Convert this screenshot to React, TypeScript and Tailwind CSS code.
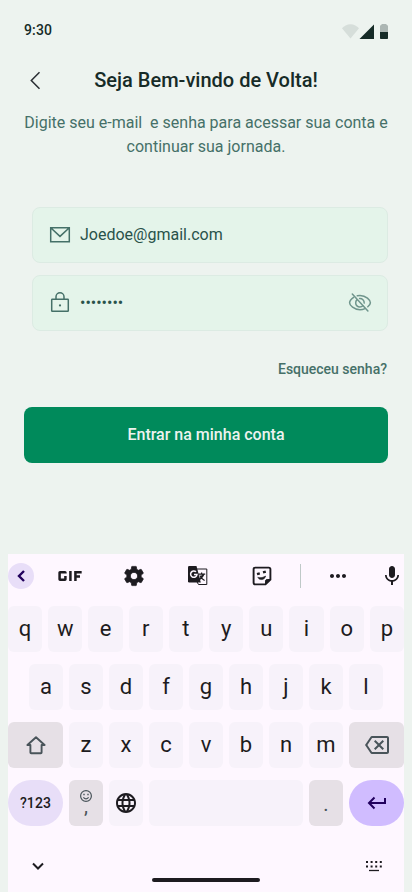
import { useState } from "react"
import {
  MdGif,
  MdSettings,
  MdMic,
  MdLanguage,
  MdMoreHoriz,
  MdOutlineBackspace,
} from "react-icons/md"

const topRow = ["q", "w", "e", "r", "t", "y", "u", "i", "o", "p"]
const middleRow = ["a", "s", "d", "f", "g", "h", "j", "k", "l"]
const bottomRow = ["z", "x", "c", "v", "b", "n", "m"]

function StatusBar() {
  return (
    <div className="flex h-[52px] items-center justify-between px-6 pt-2">
      <span className="text-sm font-medium leading-5 tracking-[0.14px] text-[#162b27]">9:30</span>
      <svg className="relative top-0.5" width="46" height="17" viewBox="0 0 46 17" fill="#162b27">
        <path d="M8.5 14.5 0 4.2C2 2 5 .2 8.5 .2S15 2 17 4.2Z" opacity="0.1" />
        <path d="M17.5 15 32 .5V15Z" />
        <path d="M38 8V2.2Q38 1 39.5 1V0h5v1Q46 1 46 2.2V8Z" opacity="0.3" />
        <path d="M38 8h8v6.2q0 .8-.8.8h-6.4q-.8 0-.8-.8Z" />
      </svg>
    </div>
  )
}

function Key({ label }: { label: string }) {
  return (
    <button className="flex h-[46px] min-w-0 flex-1 items-center justify-center rounded-md bg-[#f7f2fa] pb-px text-[22px] leading-7 text-[#1d1b20]">
      {label}
    </button>
  )
}

function Toolbar() {
  return (
    <div className="flex h-[44px] items-center text-[#1d1b20]">
      <button className="flex size-[26px] items-center justify-center rounded-full bg-[#e8def8]">
        <svg width="26" height="26" viewBox="0 0 26 26" fill="none" stroke="#21005d" strokeWidth="2.4">
          <path d="m16 8-5 5 5 5" />
        </svg>
      </button>
      <MdGif className="-mr-2 ml-4 size-10" />
      <MdSettings className="ml-10 size-6 [&>path:first-child]:hidden" stroke="currentColor" strokeWidth="0.7" />
      {/* Translate */}
      <svg className="ml-10" width="24" height="24" viewBox="0 0 24 24" fill="none" stroke="currentColor" strokeWidth="1">
        <path d="M10.5 5h10.3v15.5h-8.3L10.5 17Z" />
        <path d="M3.2 2h7.3l4.3 16.5H3.2q-1.2 0-1.2-1.2V3.2Q2 2 3.2 2Z" fill="currentColor" stroke="none" />
        <path d="m12.6 16.2 4-5.4M12.2 10.2h7M15.6 8.6v1.6M13.8 11.6q1.5 3 4.8 5M17.8 10.2q-.8 3.2-5 6" strokeWidth="1.2" />
        <path d="M10 7.8A3.2 3.2 0 1 0 11 10.5H8" stroke="#fef7ff" strokeWidth="1.5" />
      </svg>
      <svg className="ml-10" width="24" height="24" viewBox="0 0 24 24" fill="none" stroke="currentColor" strokeWidth="1.9">
        <path d="M15.5 20.4H5.3q-1.7 0-1.7-1.7V5.3q0-1.7 1.7-1.7h13.4q1.7 0 1.7 1.7v10.2Z" />
        <path d="M15.5 20.4v-3.2q0-1.7 1.7-1.7h3.2Z" fill="currentColor" strokeWidth="1" />
        <path d="m7 10.2 2.8-.8M13 8.4l2.8-.8" strokeWidth="2.4" />
        <path d="M7.7 13.4q4.4 1.1 8-1.3-1 3.3-3.9 3.5-2.6 0-4.1-2.2Z" fill="currentColor" strokeWidth=".6" />
      </svg>
      <div className="ml-[26px] h-6 w-px bg-[#bfc9c8]" />
      <MdMoreHoriz className="ml-[25px] size-6" />
      <MdMic className="ml-[30px] size-6" />
    </div>
  )
}

function Keyboard() {
  return (
    <div className="mx-2 h-[338px] bg-[#fef7ff]">
      <Toolbar />
      <div className="mt-2 flex flex-col gap-3">
        <div className="flex gap-1.5">
          {topRow.map((k) => <Key key={k} label={k} />)}
        </div>
        <div className="flex gap-1.5 px-[21px]">
          {middleRow.map((k) => <Key key={k} label={k} />)}
        </div>
        <div className="flex gap-1.5">
          <button className="flex w-[55px] items-center justify-center rounded-md bg-[#e6e0e6]">
            <svg width="24" height="24" viewBox="0 0 24 24" fill="none" stroke="#49545a" strokeWidth="1.9" strokeLinejoin="round">
              <path d="M12 4.2 3.4 12h3v7.4q0 .8.8.8h9.6q.8 0 .8-.8V12h3Z" />
            </svg>
          </button>
          {bottomRow.map((k) => <Key key={k} label={k} />)}
          <button className="flex w-[55px] items-center justify-center rounded-md bg-[#e6e0e6]">
            <MdOutlineBackspace className="size-6 text-[#49545a]" />
          </button>
        </div>
        <div className="flex h-[46px] gap-1.5">
          <button className="w-[55px] rounded-full bg-[#e8def8] text-sm font-medium tracking-[0.1px] text-[#1d1b20]">?123</button>
          <button className="flex w-[34px] flex-col items-center rounded-md bg-[#e6e0e6] pt-2.5 text-[#49545a]">
            <svg width="12" height="12" viewBox="0 0 12 12" fill="none" stroke="currentColor" strokeWidth="1.2">
              <circle cx="6" cy="6" r="5.4" />
              <path d="M3.4 7.3q2.6 3.2 5.2 0" />
              <path d="M4 3.7v1.5M8 3.7v1.5" strokeWidth="1.4" />
            </svg>
            <span className="-mt-1 text-xl leading-4">,</span>
          </button>
          <button className="flex w-[34px] items-center justify-center rounded-md bg-[#f7f2fa]">
            <MdLanguage className="size-6 text-[#1d1b20]" />
          </button>
          <button className="flex-1 rounded-md bg-[#f7f2fa]" />
          <button className="w-[34px] rounded-md bg-[#e6e0e6] pt-0.5 text-xl text-[#49545a]">.</button>
          <button className="flex w-[55px] items-center justify-center rounded-full bg-[#d0bcff]">
            <svg width="24" height="24" viewBox="0 0 24 24" fill="none" stroke="#21005d" strokeWidth="2">
              <path d="M20 7v5H4.5M9.5 6.5 4 12l5.5 5.5" />
            </svg>
          </button>
        </div>
      </div>
      <div className="mt-[28px] flex justify-between px-[18px]">
        <svg width="24" height="24" viewBox="0 0 24 24" fill="none" stroke="#1d1b20" strokeWidth="2">
          <path d="m7 9.5 5 5 5-5" />
        </svg>
        <svg width="24" height="24" viewBox="0 0 24 24" fill="none" stroke="#1d1b20" strokeWidth="2">
          <path d="M4 8h16M4 12.5h16" strokeDasharray="2 2.6" />
          <path d="M7 16.5h10" strokeWidth="1.3" />
        </svg>
      </div>
      <div className="mx-auto h-1 w-[108px] rounded-full bg-[#1d1b20]" />
    </div>
  )
}

export default function App() {
  const [email, setEmail] = useState("Joedoe@gmail.com")
  const [password, setPassword] = useState("12345678")
  const [visible, setVisible] = useState(false)

  return (
    <div className="flex h-[892px] w-[412px] flex-col justify-between overflow-hidden bg-[#edf3ef] font-[Roboto,sans-serif]">
      <div>
        <StatusBar />

        {/* Header */}
        <div className="relative mt-3.5 flex h-7 items-center justify-center">
          <button className="absolute left-6 top-0.5">
            <svg width="24" height="24" viewBox="0 0 24 24" fill="none" stroke="#292d32" strokeWidth="1.5">
              <path d="m15.5 4.3-8.2 8.2 8.2 8.2" />
            </svg>
          </button>
          <h1 className="text-xl font-medium text-[#162b27]">Seja Bem-vindo de Volta!</h1>
        </div>
        <p className="mt-[17px] text-center text-base leading-6 text-[#457068]">
          Digite seu e-mail{"\u00a0 "}e senha para acessar sua conta e
          <br />
          continuar sua jornada.
        </p>

        {/* Form */}
        <div className="ml-8 mr-6 mt-12 space-y-3">
          <label className="flex h-14 items-center rounded-lg border border-[#dcebe3] bg-[#e4f4ea] px-[15px]">
            <svg width="24" height="24" viewBox="0 0 24 24" fill="none" stroke="#457068" strokeWidth="1.5">
              <path d="M2.7 4.7h18.6v14H2.7ZM2.7 4.7 12 13.4l9.3-8.7" />
            </svg>
            <input
              type="text"
              value={email}
              onChange={(e) => setEmail(e.target.value)}
              className="ml-2 w-56 bg-transparent text-base text-[#29524a] outline-none"
            />
          </label>
          <label className="flex h-14 items-center rounded-lg border border-[#dcebe3] bg-[#e4f4ea] px-[15px]">
            <svg width="24" height="24" viewBox="0 0 24 24" fill="none" stroke="#457068" strokeWidth="1.5">
              <rect x="3.7" y="8.3" width="16.6" height="12" rx="0.6" />
              <path d="M8 8.3V5.8a4 4 0 0 1 8 0v2.5" />
              <circle cx="12" cy="14.4" r="1.1" fill="#457068" stroke="none" />
            </svg>
            <input
              type={visible ? "text" : "password"}
              value={password}
              onChange={(e) => setPassword(e.target.value)}
              className="ml-2 w-56 bg-transparent text-base text-[#29524a] outline-none"
            />
            <button type="button" className="ml-auto" onClick={() => setVisible(!visible)}>
              <svg width="24" height="24" viewBox="0 0 24 24" fill="none" stroke="#6f958c" strokeWidth="1.5" strokeLinecap="round">
                <path d="M9.3 4.8q1.3-.4 2.7-.4c6 0 10.4 4.7 10.4 7.3q0 1.7-2.6 4M17 17.6q-2.4 1.1-5 1.1C6 18.7 1.6 14.3 1.6 11.7q0-2.4 4-5.3" />
                <path d="M8.9 8.9a4.2 4.2 0 0 0 6 5.9M11.6 7.5a4.3 4.3 0 0 1 4.6 4.6" />
                <path d="m4.3 3 15.6 17" />
              </svg>
            </button>
          </label>
        </div>
        <div className="mr-[25px] mt-7 text-right text-sm font-medium leading-5 text-[#457068]">
          Esqueceu senha?
        </div>
        <button className="mx-6 mt-7 block h-14 w-[364px] rounded-lg bg-[#008a5b] text-base font-medium text-[#edf3ef]">
          Entrar na minha conta
        </button>
      </div>

      <Keyboard />
    </div>
  )
}
